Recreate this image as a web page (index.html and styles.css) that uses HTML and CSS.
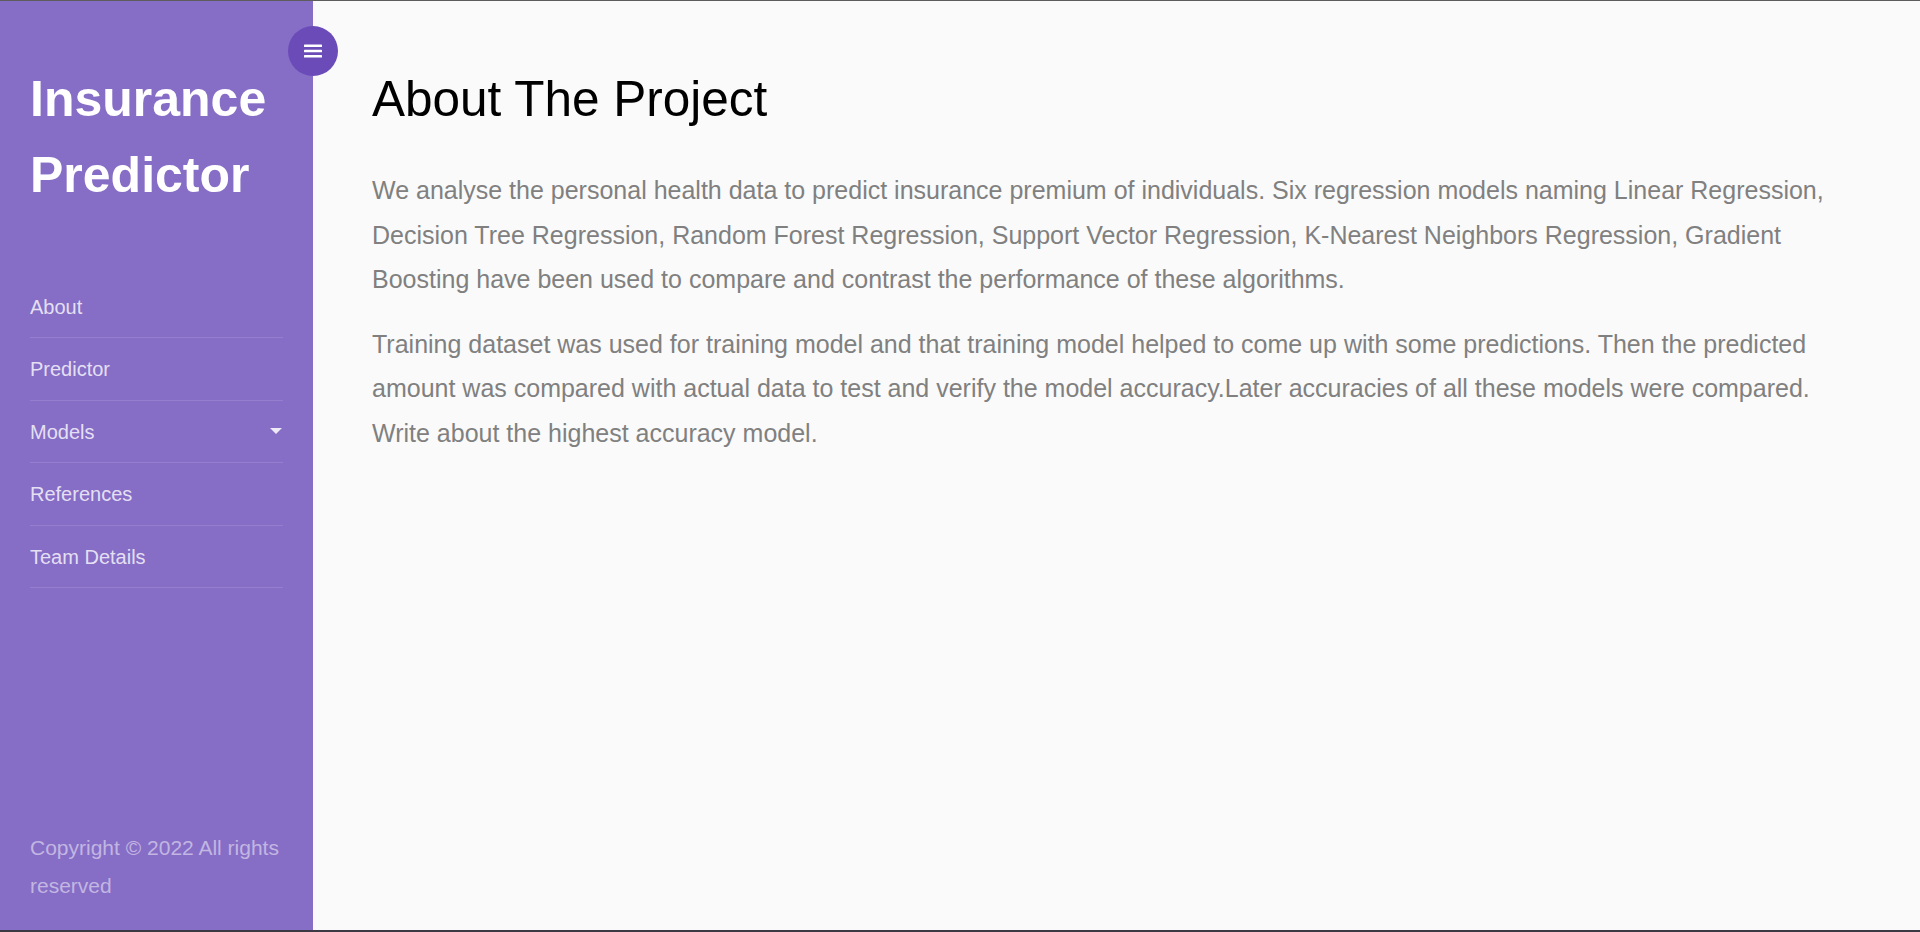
FILE: index.html
```html
<!DOCTYPE html>
<html lang="en">
<head>
<meta charset="utf-8">
<title>Insurance Predictor</title>
<link rel="stylesheet" href="styles.css">
</head>
<body>
<div class="wrapper">
  <nav class="sidebar">
    <button class="toggle" type="button" aria-label="Toggle menu">
      <svg width="18" height="14" viewBox="0 0 18 14" aria-hidden="true">
        <rect x="0" y="0.5" width="18" height="2.6" rx="0.6" fill="#fff"/>
        <rect x="0" y="5.7" width="18" height="2.6" rx="0.6" fill="#fff"/>
        <rect x="0" y="10.9" width="18" height="2.6" rx="0.6" fill="#fff"/>
      </svg>
    </button>
    <h1 class="brand">Insurance Predictor</h1>
    <ul class="menu">
      <li><a href="#">About</a></li>
      <li><a href="#">Predictor</a></li>
      <li><a href="#" class="dropdown">Models<span class="caret"></span></a></li>
      <li><a href="#">References</a></li>
      <li><a href="#">Team Details</a></li>
    </ul>
    <div class="footer">Copyright © 2022 All rights reserved</div>
  </nav>
  <main class="content">
    <h2 class="title">About The Project</h2>
    <p class="text">We analyse the personal health data to predict insurance premium of individuals. Six regression models naming Linear Regression, Decision Tree Regression, Random Forest Regression, Support Vector Regression, K-Nearest Neighbors Regression, Gradient Boosting have been used to compare and contrast the performance of these algorithms.</p>
    <p class="text">Training dataset was used for training model and that training model helped to come up with some predictions. Then the predicted amount was compared with actual data to test and verify the model accuracy.Later accuracies of all these models were compared. Write about the highest accuracy model.</p>
  </main>
</div>
</body>
</html>
```

FILE: styles.css
```css
* { box-sizing: border-box; }

html, body { height: 100%; }

body {
  margin: 0;
  font-family: "Liberation Sans", Arial, sans-serif;
  background: #fafafa;
  border-top: 1px solid #5c5c5c;
  border-bottom: 2px solid #3b3a44;
}

.wrapper {
  display: flex;
  height: 100%;
}

.sidebar {
  position: relative;
  flex: 0 0 313px;
  width: 313px;
  background: #866dc6;
  padding: 60px 30px 25px;
  display: flex;
  flex-direction: column;
}

.toggle {
  position: absolute;
  top: 25px;
  right: -25px;
  width: 50px;
  height: 50px;
  border: 0;
  border-radius: 50%;
  background: #6a4bb8;
  padding: 0;
  display: flex;
  align-items: center;
  justify-content: center;
  cursor: pointer;
  z-index: 2;
}

.toggle svg { display: block; }

.brand {
  margin: 0 0 63px;
  color: #fff;
  font-size: 50px;
  font-weight: 700;
  line-height: 76px;
}

.menu {
  list-style: none;
  margin: 0;
  padding: 0;
}

.menu li {
  border-bottom: 1px solid rgba(255, 255, 255, 0.12);
}

.menu a {
  display: flex;
  align-items: center;
  justify-content: space-between;
  padding: 17px 0 15px;
  font-size: 20px;
  line-height: 29.4px;
  color: rgba(255, 255, 255, 0.8);
  text-decoration: none;
}

.caret {
  width: 0;
  height: 0;
  border-top: 6px solid rgba(255, 255, 255, 0.85);
  border-left: 6px solid transparent;
  border-right: 6px solid transparent;
  margin-right: 1px;
  margin-top: -4px;
}

.footer {
  margin-top: auto;
  font-size: 21px;
  line-height: 38px;
  color: rgba(255, 255, 255, 0.5);
}

.content {
  flex: 1;
  padding: 68px 59px 40px;
}

.title {
  margin: 0 0 40px;
  font-size: 49.5px;
  font-weight: 400;
  line-height: 59.4px;
  color: #000;
}

.text {
  margin: 0 0 20px;
  font-size: 25px;
  line-height: 44.5px;
  color: #808080;
}
```
